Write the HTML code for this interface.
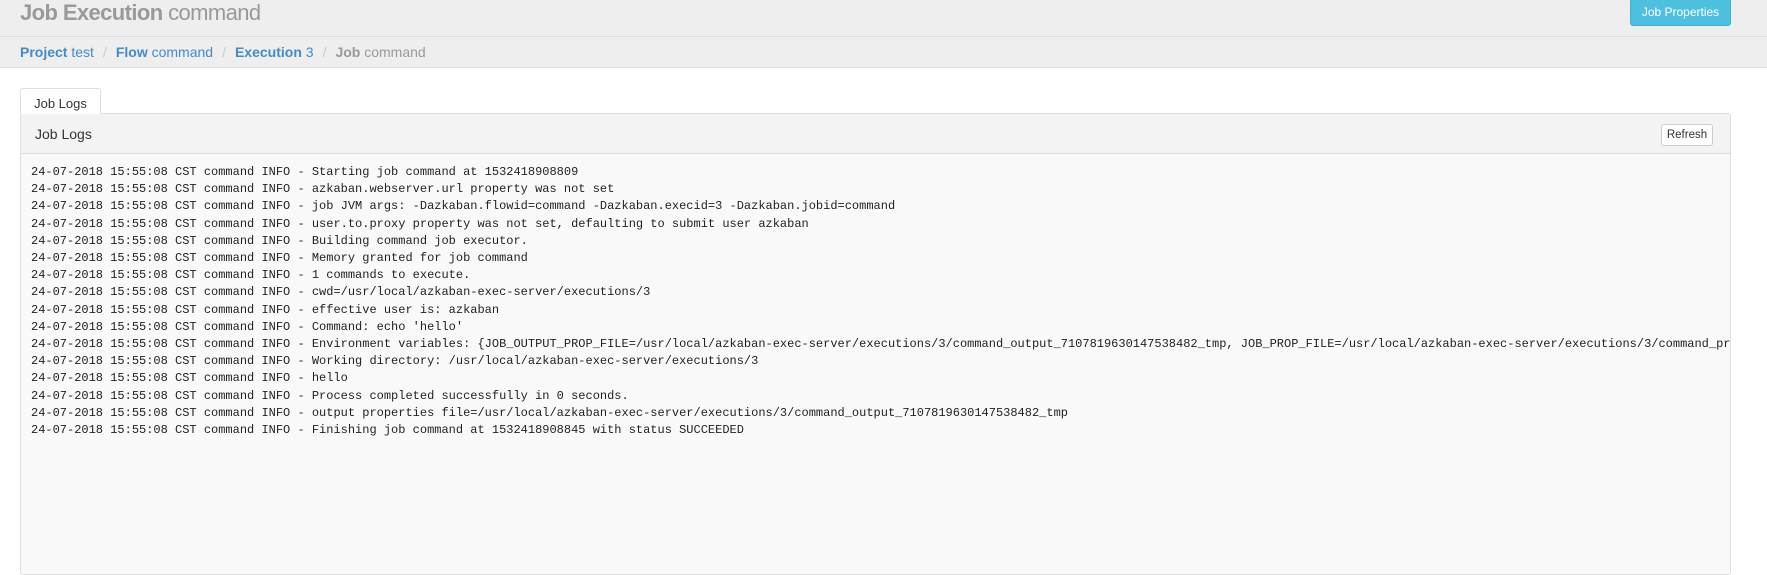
<!DOCTYPE html>
<html><head><style>
body{margin:0;width:1767px;height:537px;overflow:hidden;background:#fff;font-family:"Liberation Sans",sans-serif;}
.hdr{position:absolute;left:0;top:0;width:1767px;height:36px;background:#eee;border-bottom:1px solid #ddd;}
.hdr h1{position:absolute;left:20px;top:2px;margin:0;font-size:22px;line-height:22px;font-weight:bold;color:#999;letter-spacing:-0.6px}
.hdr h1 span{font-weight:normal}
.btn{position:absolute;left:1630px;top:-2px;width:99px;height:26px;background:#4cc0de;border:1px solid #3fb2d2;border-radius:3px;color:#fff;font-size:12px;line-height:26px;text-align:center;}
.bc{position:absolute;left:0;top:37px;width:1767px;height:30px;background:#eee;border-bottom:1px solid #ddd;font-size:14px;line-height:18px;}
.bc div{position:absolute;left:20px;top:6px;color:#428bca}
.bc b{font-weight:bold}
.bc .s{color:#ccc;padding:0 9px}
.bc .g{color:#999}
.tab{position:absolute;left:20px;top:88px;width:81px;height:26px;border:1px solid #ddd;border-bottom:none;border-radius:3px 3px 0 0;background:#fff;font-size:13px;line-height:30px;text-align:center;color:#333;z-index:2;box-sizing:border-box}
.panel{position:absolute;left:20px;top:113px;width:1709px;height:460px;border:1px solid #ddd;border-radius:3px;background:#f9f9f9;overflow:hidden}
.ph{height:39px;background:#f3f3f3;border-bottom:1px solid #ddd;position:relative}
.ph span{position:absolute;left:14px;top:12px;font-size:14px;color:#333}
.ref{position:absolute;left:1640px;top:10px;width:50px;height:20px;border:1px solid #ccc;border-radius:3px;background:#fff;font-size:11.5px;line-height:20px;text-align:center;color:#333}
pre{margin:0;position:absolute;left:10px;top:50px;font-family:"Liberation Mono",monospace;font-size:12px;line-height:17.2px;color:#222;white-space:pre}
</style></head><body>
<div class="hdr"><h1>Job Execution <span>command</span></h1><div class="btn">Job Properties</div></div>
<div class="bc"><div><b>Project</b> test<span class="s">/</span><b>Flow</b> command<span class="s">/</span><b>Execution</b> 3<span class="s">/</span><span class="g"><b>Job</b> command</span></div></div>
<div class="tab">Job Logs</div>
<div class="panel">
<div class="ph"><span>Job Logs</span><div class="ref">Refresh</div></div>
<pre>24-07-2018 15:55:08 CST command INFO - Starting job command at 1532418908809
24-07-2018 15:55:08 CST command INFO - azkaban.webserver.url property was not set
24-07-2018 15:55:08 CST command INFO - job JVM args: -Dazkaban.flowid=command -Dazkaban.execid=3 -Dazkaban.jobid=command
24-07-2018 15:55:08 CST command INFO - user.to.proxy property was not set, defaulting to submit user azkaban
24-07-2018 15:55:08 CST command INFO - Building command job executor. 
24-07-2018 15:55:08 CST command INFO - Memory granted for job command
24-07-2018 15:55:08 CST command INFO - 1 commands to execute.
24-07-2018 15:55:08 CST command INFO - cwd=/usr/local/azkaban-exec-server/executions/3
24-07-2018 15:55:08 CST command INFO - effective user is: azkaban
24-07-2018 15:55:08 CST command INFO - Command: echo 'hello'
24-07-2018 15:55:08 CST command INFO - Environment variables: {JOB_OUTPUT_PROP_FILE=/usr/local/azkaban-exec-server/executions/3/command_output_7107819630147538482_tmp, JOB_PROP_FILE=/usr/local/azkaban-exec-server/executions/3/command_props_
24-07-2018 15:55:08 CST command INFO - Working directory: /usr/local/azkaban-exec-server/executions/3
24-07-2018 15:55:08 CST command INFO - hello
24-07-2018 15:55:08 CST command INFO - Process completed successfully in 0 seconds.
24-07-2018 15:55:08 CST command INFO - output properties file=/usr/local/azkaban-exec-server/executions/3/command_output_7107819630147538482_tmp
24-07-2018 15:55:08 CST command INFO - Finishing job command at 1532418908845 with status SUCCEEDED</pre>
</div>
</body></html>
